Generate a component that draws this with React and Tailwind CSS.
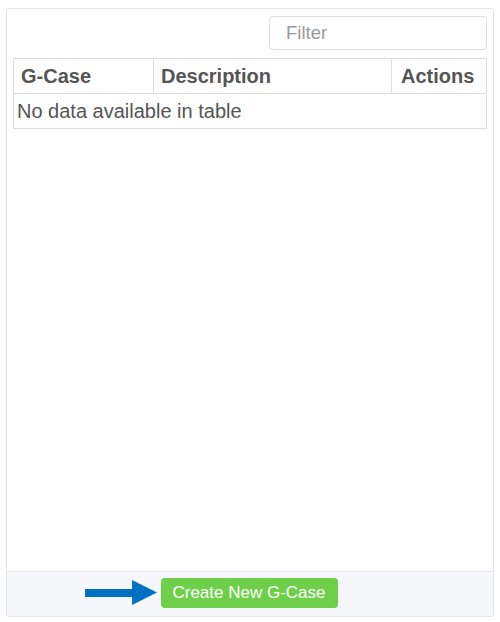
import React from "react";

function ArrowIcon() {
  return (
    <svg width="74" height="26" viewBox="0 0 74 26" className="absolute right-[calc(100%+2px)] top-[2px]">
      <rect x="0" y="9" width="49" height="8" fill="#0070c0" />
      <polygon points="47,0 72,12.5 47,25" fill="#0070c0" />
    </svg>
  );
}

export default function App() {
  return (
    <div className="w-[500px] h-[622px] bg-white pt-[8px] pl-[6px]" style={{ fontFamily: '"Liberation Sans", Arial, sans-serif' }}>
      <div className="w-[488px] h-[609px] border border-[#e3e3e3] rounded-[3px] flex flex-col">
        <div className="flex-1 px-[6px] pt-[7px]">
          <div className="flex justify-end">
            <input
              placeholder="Filter"
              className="w-[218px] h-[34px] border border-[#dddddd] rounded-[4px] px-[16px] text-[18.5px] text-[#555] placeholder:text-[#999] outline-none"
            />
          </div>
          <table className="mt-[8px] w-full border-collapse text-[20px] text-[#555]">
            <thead>
              <tr className="h-[35px]">
                <th className="w-[140px] border border-[#dddddd] text-left font-bold px-[7px]">G-Case</th>
                <th className="w-[238px] border border-[#dddddd] text-left font-bold px-[7px]">Description</th>
                <th className="border border-[#dddddd] text-left font-bold px-[9px]">Actions</th>
              </tr>
            </thead>
            <tbody>
              <tr className="h-[35px]">
                <td colSpan={3} className="border border-[#dddddd] px-[3px]">No data available in table</td>
              </tr>
            </tbody>
          </table>
        </div>
        <div className="h-[45px] border-t border-[#e3e3e3] bg-[#f5f7fa] rounded-b-[3px] flex justify-center pt-[6px]">
          <div className="relative h-[30px] ml-[-2px]">
            <ArrowIcon />
            <button className="h-[30px] w-[177px] rounded-[4px] bg-[#6fcf4b] text-white text-[17px]">
              Create New G-Case
            </button>
          </div>
        </div>
      </div>
    </div>
  );
}
